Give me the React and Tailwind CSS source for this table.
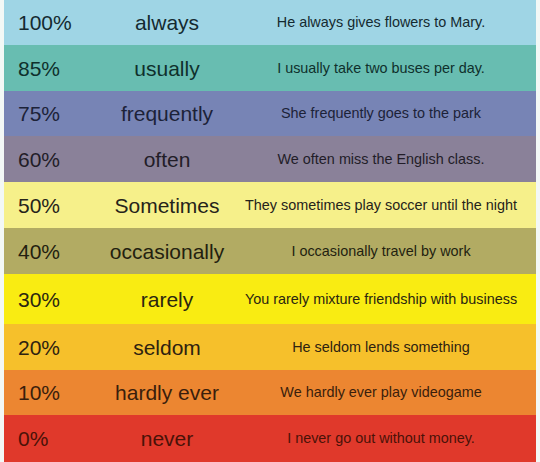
import React from 'react';

const rows = [
  { pct: '100%', adv: 'always', ex: 'He always gives flowers to Mary.', bg: 'bg-[#9fd5e5]', h: 'h-[45px]', tx: 'text-[#142a30]' },
  { pct: '85%', adv: 'usually', ex: 'I usually take two buses per day.', bg: 'bg-[#68bdb1]', h: 'h-[46px]', tx: 'text-[#0f302c]' },
  { pct: '75%', adv: 'frequently', ex: 'She frequently goes to the park', bg: 'bg-[#7784b5]', h: 'h-[45px]', tx: 'text-[#1c2238]' },
  { pct: '60%', adv: 'often', ex: 'We often miss the English class.', bg: 'bg-[#8a8199]', h: 'h-[46px]', tx: 'text-[#221d28]' },
  { pct: '50%', adv: 'Sometimes', ex: 'They sometimes play soccer until the night', bg: 'bg-[#f6f08a]', h: 'h-[46px]', tx: 'text-[#25231a]' },
  { pct: '40%', adv: 'occasionally', ex: 'I occasionally travel by work', bg: 'bg-[#b2ab63]', h: 'h-[46px]', tx: 'text-[#231f10]' },
  { pct: '30%', adv: 'rarely', ex: 'You rarely mixture friendship with business', bg: 'bg-[#f9ec12]', h: 'h-[50px]', tx: 'text-[#2a2610]' },
  { pct: '20%', adv: 'seldom', ex: 'He seldom lends something', bg: 'bg-[#f6c02b]', h: 'h-[46px]', tx: 'text-[#2e2210]' },
  { pct: '10%', adv: 'hardly ever', ex: 'We hardly ever play videogame', bg: 'bg-[#ec8631]', h: 'h-[45px]', tx: 'text-[#3a1e0c]' },
  { pct: '0%', adv: 'never', ex: 'I never go out without money.', bg: 'bg-[#e0392b]', h: 'h-[47px]', tx: 'text-[#4a1208]' },
];

export default function App() {
  return (
    <div className="w-[540px] h-[462px] bg-[#f3f8f6] px-[4px] overflow-hidden font-['Liberation_Sans',Arial,sans-serif]">
      <div className="flex flex-col">
        {rows.map((r) => (
          <div key={r.pct} className={`grid grid-cols-[94px_138px_290px_10px] items-center ${r.bg} ${r.h} ${r.tx}`}>
            <span className="pl-[14px] text-[21px] leading-none">{r.pct}</span>
            <span className="text-center text-[21px] leading-none">{r.adv}</span>
            <span className="text-center text-[14.4px] leading-none whitespace-nowrap">{r.ex}</span>
            <span />
          </div>
        ))}
      </div>
    </div>
  );
}
